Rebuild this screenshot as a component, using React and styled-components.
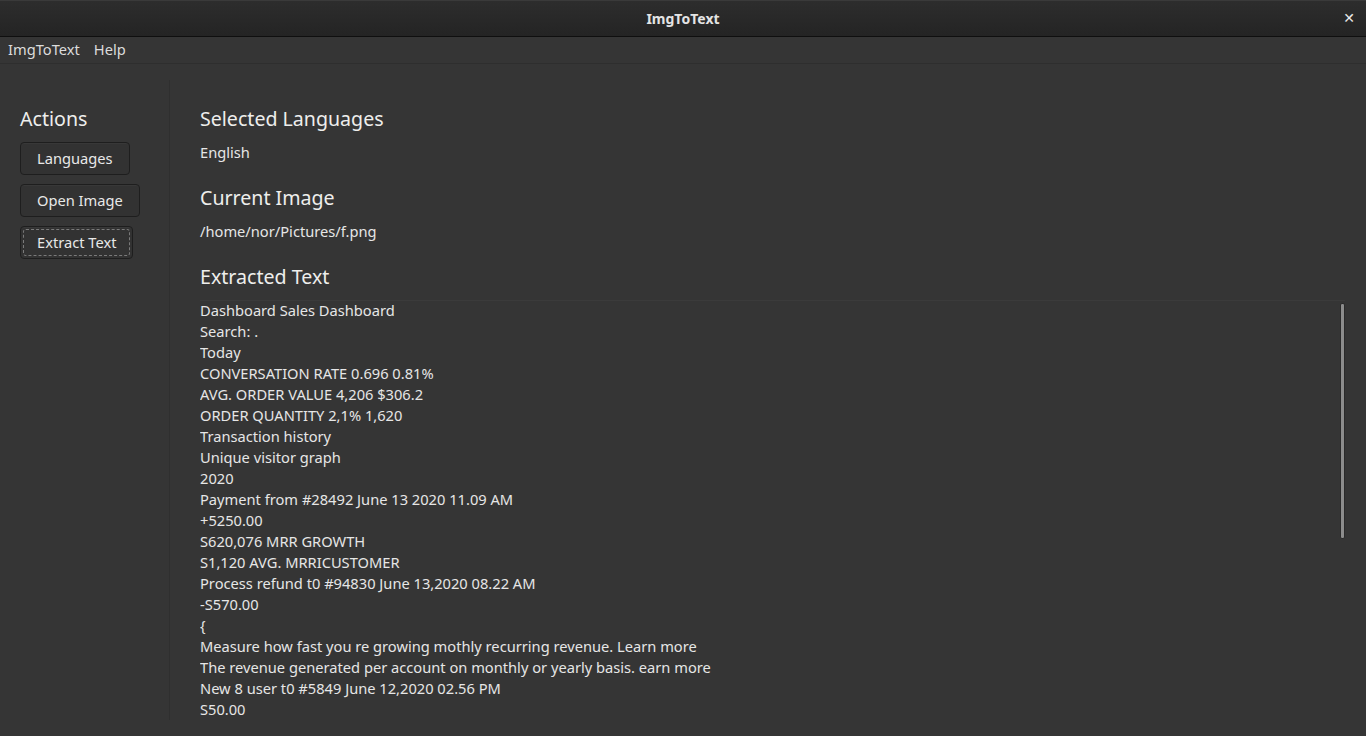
import React from "react";
import styled, { createGlobalStyle } from "styled-components";

const lines = [
  "Dashboard Sales Dashboard",
  "Search: .",
  "Today",
  "CONVERSATION RATE 0.696 0.81%",
  "AVG. ORDER VALUE 4,206 $306.2",
  "ORDER QUANTITY 2,1% 1,620",
  "Transaction history",
  "Unique visitor graph",
  "2020",
  "Payment from #28492 June 13 2020 11.09 AM",
  "+5250.00",
  "S620,076 MRR GROWTH",
  "S1,120 AVG. MRRICUSTOMER",
  "Process refund t0 #94830 June 13,2020 08.22 AM",
  "-S570.00",
  "{",
  "Measure how fast you re growing mothly recurring revenue. Learn more",
  "The revenue generated per account on monthly or yearly basis. earn more",
  "New 8 user t0 #5849 June 12,2020 02.56 PM",
  "S50.00",
];

const GlobalStyle = createGlobalStyle`
  html, body, #root {
    margin: 0;
    height: 100%;
  }
  body {
    background: #353535;
    color: #eeeeec;
    font-family: "Noto Sans", "DejaVu Sans", sans-serif;
    overflow: hidden;
  }
`;

const Window = styled.div`
  display: flex;
  flex-direction: column;
  height: 100vh;
`;

const TitleBar = styled.div`
  height: 37px;
  flex-shrink: 0;
  box-sizing: border-box;
  display: flex;
  align-items: center;
  justify-content: center;
  position: relative;
  padding-bottom: 1px;
  background: linear-gradient(#2d2d2d, #242424);
  border-top: 1px solid #3a3a3a;
  border-bottom: 1px solid #0f0f0f;
  font-size: 14px;
  font-weight: bold;
  color: #e4e4e4;
`;

const CloseButton = styled.span`
  position: absolute;
  right: 11px;
  top: 7px;
  font-size: 14px;
  font-weight: bold;
  color: #e8e8e8;
`;

const MenuBar = styled.div`
  height: 27px;
  flex-shrink: 0;
  box-sizing: border-box;
  display: flex;
  align-items: center;
  gap: 14px;
  padding: 0 0 2px 8px;
  border-bottom: 1px solid #2e2e2e;
  font-size: 14.67px;
  color: #dcdcdc;
`;

const Main = styled.div`
  flex: 1;
  min-height: 0;
  display: flex;
  padding: 16px 0;
`;

const Sidebar = styled.div`
  width: 170px;
  flex-shrink: 0;
  box-sizing: border-box;
  padding: 25px 20px 0;
  border-right: 1px solid #2f2f2f;
  display: flex;
  flex-direction: column;
  align-items: flex-start;
`;

const Heading = styled.h2`
  margin: 0;
  font-size: 19.6px;
  font-weight: normal;
  line-height: 28px;
  color: #eeeeec;
`;

const ButtonStack = styled.div`
  display: flex;
  flex-direction: column;
  align-items: flex-start;
  gap: 9px;
  margin-top: 9px;
`;

const Button = styled.button`
  position: relative;
  height: 33px;
  padding: 0 16px 1px;
  font-family: inherit;
  font-size: 14.67px;
  color: #e8e8e8;
  background: #323232;
  border: 1px solid #1e1e1e;
  border-radius: 4px;
  box-shadow: inset 0 1px rgba(255, 255, 255, 0.03);
  ${(p) =>
    p.focused &&
    `
    &::after {
      content: "";
      position: absolute;
      inset: 2px;
      border: 1px dashed #7a7a7a;
      border-radius: 3px;
    }
  `}
`;

const Content = styled.div`
  flex: 1;
  min-width: 0;
  display: flex;
  flex-direction: column;
  padding: 25px 21px 0 30px;
`;

const Value = styled.div`
  margin-top: 9px;
  margin-bottom: 21px;
  font-size: 14.67px;
  line-height: 21px;
  color: #e6e6e6;
`;

const TextArea = styled.div`
  position: relative;
  flex: 1;
  min-height: 0;
  margin-top: 9px;
  border-top: 1px solid #3b3b3b;
  overflow: hidden;
  font-size: 14.67px;
  line-height: 21px;
  color: #e6e6e6;
`;

const TextBody = styled.div`
  margin-top: -1px;
`;

const ScrollThumb = styled.div`
  position: absolute;
  right: 0;
  top: 2px;
  width: 5px;
  height: 236px;
  border-radius: 2px;
  background: #8c8c8c;
  border: 1px solid #2a2a2a;
  box-sizing: border-box;
`;

const Line = styled.div`
  white-space: pre;
`;

export default function App() {
  return (
    <>
      <GlobalStyle />
      <Window>
        <TitleBar>
          ImgToText
          <CloseButton>✕</CloseButton>
        </TitleBar>
        <MenuBar>
          <span>ImgToText</span>
          <span>Help</span>
        </MenuBar>
        <Main>
          <Sidebar>
            <Heading>Actions</Heading>
            <ButtonStack>
              <Button>Languages</Button>
              <Button>Open Image</Button>
              <Button focused>Extract Text</Button>
            </ButtonStack>
          </Sidebar>
          <Content>
            <Heading>Selected Languages</Heading>
            <Value>English</Value>
            <Heading>Current Image</Heading>
            <Value>/home/nor/Pictures/f.png</Value>
            <Heading>Extracted Text</Heading>
            <TextArea>
              <TextBody>
                {lines.map((l, i) => (
                  <Line key={i}>{l}</Line>
                ))}
              </TextBody>
              <ScrollThumb />
            </TextArea>
          </Content>
        </Main>
      </Window>
    </>
  );
}
